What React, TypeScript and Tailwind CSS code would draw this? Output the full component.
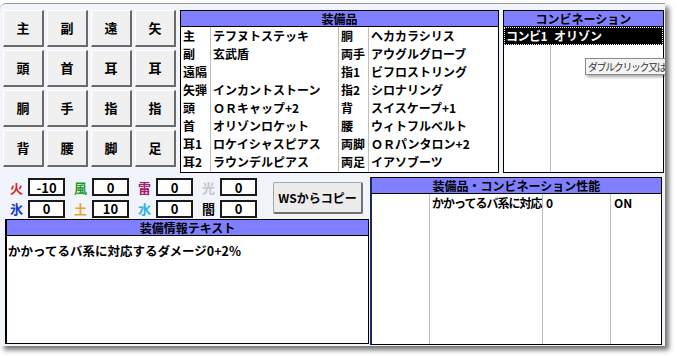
import React from "react";

const slots = ["主", "副", "遠", "矢", "頭", "首", "耳", "耳", "胴", "手", "指", "指", "背", "腰", "脚", "足"];

const equipLeft = [
  ["主", "テフヌトステッキ"],
  ["副", "玄武盾"],
  ["遠隔", ""],
  ["矢弾", "インカントストーン"],
  ["頭", "ＯＲキャップ+2"],
  ["首", "オリゾンロケット"],
  ["耳1", "ロケイシャスピアス"],
  ["耳2", "ラウンデルピアス"],
];

const equipRight = [
  ["胴", "ヘカカラシリス"],
  ["両手", "アウグルグローブ"],
  ["指1", "ビフロストリング"],
  ["指2", "シロナリング"],
  ["背", "スイスケープ+1"],
  ["腰", "ウィトフルベルト"],
  ["両脚", "ＯＲパンタロン+2"],
  ["両足", "イアソブーツ"],
];

const elemRow1 = [
  { label: "火", color: "text-[#e0201c]", value: "-10" },
  { label: "風", color: "text-[#1f9a2c]", value: "0" },
  { label: "雷", color: "text-[#a3226e]", value: "0" },
  { label: "光", color: "text-[#c4c4c4]", value: "0" },
];

const elemRow2 = [
  { label: "氷", color: "text-[#1838c8]", value: "0" },
  { label: "土", color: "text-[#f0a02c]", value: "10" },
  { label: "水", color: "text-[#2cb4e8]", value: "0" },
  { label: "闇", color: "text-black", value: "0" },
];

const Header = ({ title }: { title: string }) => (
  <div className="h-[16px] bg-[#8080ff] border-b border-black flex items-center justify-center text-[12px] leading-[16px] font-bold">
    {title}
  </div>
);

const Column = ({ items, className }: { items: string[]; className: string }) => (
  <div className={className}>
    {items.map((t, i) => (
      <div key={i} className="h-[18px] leading-[18px] whitespace-nowrap overflow-hidden">
        {t}
      </div>
    ))}
  </div>
);

const ElemRow = ({ items }: { items: { label: string; color: string; value: string }[] }) => (
  <div className="flex">
    {items.map((e, i) => (
      <div key={i} className="w-[64px] flex items-center">
        <span className={`w-[23px] text-center text-[13px] font-bold ${e.color}`}>{e.label}</span>
        <div className="w-[37px] h-[18px] bg-white border-2 border-[#1a1a1a] flex items-center justify-center text-[13px] font-bold leading-none">
          {e.value}
        </div>
      </div>
    ))}
  </div>
);

export default function App() {
  return (
    <div
      className="w-[677px] h-[356px] bg-white overflow-hidden text-black"
      style={{ fontFamily: '"Noto Sans CJK JP", "Liberation Sans", sans-serif' }}
    >
      <div className="relative mt-[3px] w-[665px] h-[343px] bg-[#f1f5fb] border-t border-[#9c9c9c] rounded-tl-[6px] shadow-[4px_4px_5px_rgba(0,0,0,0.55)] overflow-hidden pt-[6px] pl-[3px]">
        {/* top row */}
        <div className="flex items-start">
          <div className="grid grid-cols-[repeat(4,41px)] grid-rows-[repeat(4,37px)] gap-[3px]">
            {slots.map((s, i) => (
              <button
                key={i}
                className="bg-[#f0f0f0] border-t border-l border-white border-r-2 border-b-2 border-r-[#6a6a6a] border-b-[#6a6a6a] text-[13px] font-bold flex items-center justify-center"
              >
                {s}
              </button>
            ))}
          </div>

          <div className="ml-[4px] w-[319px] h-[163px] border border-black bg-white flex flex-col">
            <Header title="装備品" />
            <div className="flex flex-1 text-[12px] font-bold">
              <Column items={equipLeft.map((e) => e[0])} className="w-[30px] pl-[2px] border-r border-[#bdbdbd]" />
              <Column items={equipLeft.map((e) => e[1])} className="w-[128px] pl-[2px] border-r border-[#bdbdbd]" />
              <Column items={equipRight.map((e) => e[0])} className="w-[30px] pl-[2px] border-r border-[#bdbdbd]" />
              <Column items={equipRight.map((e) => e[1])} className="flex-1 pl-[2px]" />
            </div>
          </div>

          <div className="ml-[4px] w-[161px] h-[163px] border border-black bg-white flex flex-col">
            <Header title="コンビネーション" />
            <div className="relative flex-1 text-[12px] font-bold">
              <div className="absolute left-[46px] top-0 bottom-0 w-px bg-[#bdbdbd]" />
              <div className="relative h-[18px] bg-black text-white border border-dotted border-white flex items-center leading-none">
                <span className="w-[46px] pl-[1px] tracking-[-0.5px] whitespace-nowrap">コンビ1</span>
                <span className="pl-[3px]">オリゾン</span>
              </div>
            </div>
          </div>
        </div>

        {/* bottom */}
        <div className="flex mt-[4px]">
          <div className="w-[366px] flex flex-col pl-[2px]">
            <div className="flex items-center h-[40px] mt-[1px]">
              <div className="flex flex-col gap-[2px]">
                <ElemRow items={elemRow1} />
                <ElemRow items={elemRow2} />
              </div>
              <button className="ml-[12px] w-[90px] h-[32px] bg-[#ececec] border border-[#a8a8a8] border-r-2 border-b-2 border-r-[#707070] border-b-[#707070] rounded-[2px] text-[12px] font-bold">
                WSからコピー
              </button>
            </div>
            <div className="mt-[1px] h-[125px] border border-black border-l-2 bg-white flex flex-col">
              <Header title="装備情報テキスト" />
              <div className="px-[1px] pt-[7px] text-[12.5px] font-bold leading-[16px]">
                かかってるバ系に対応するダメージ0+2%
              </div>
            </div>
          </div>

          <div className="ml-[1px] w-[292px] h-[168px] border border-black border-l-2 border-l-[#1c2a5a] bg-white flex flex-col">
            <Header title="装備品・コンビネーション性能" />
            <div className="flex flex-1 text-[12px] font-bold">
              <div className="w-[58px] border-r border-[#bdbdbd]" />
              <div className="w-[113px] border-r border-[#bdbdbd] pl-[2px] leading-[18px] whitespace-nowrap overflow-hidden tracking-[-1px]">
                かかってるバ系に対応
              </div>
              <div className="w-[68px] border-r border-[#bdbdbd] pl-[3px] leading-[18px]">0</div>
              <div className="flex-1 pl-[3px] leading-[18px]">ON</div>
            </div>
          </div>
        </div>

        {/* tooltip */}
        <div className="absolute left-[585px] top-[54px] h-[17px] px-[2px] bg-[#f4f4f4] border border-[#8a8a8a] shadow-[2px_2px_3px_rgba(0,0,0,0.35)] text-[10px] leading-[15px] tracking-[-1.4px] text-[#333] whitespace-nowrap">
          ダブルクリック又は右クリック
        </div>
      </div>
    </div>
  );
}
